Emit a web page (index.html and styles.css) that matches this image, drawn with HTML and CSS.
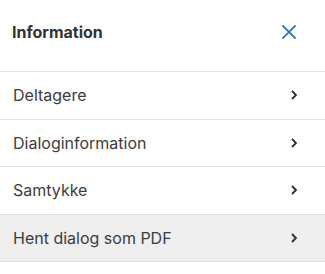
FILE: index.html
```html
<!DOCTYPE html>
<html lang="da">
<head>
    <meta charset="UTF-8">
    <meta name="viewport" content="width=device-width, initial-scale=1.0">
    <title>Information</title>
    <link rel="stylesheet" href="styles.css">
</head>
<body>
    <div class="panel">
        <div class="header">
            <h1>Information</h1>
            <button class="close" type="button" aria-label="Luk">
                <svg width="14" height="14" viewBox="0 0 14 14">
                    <path d="M1 1 L13 13 M13 1 L1 13" stroke="#2c79d1" stroke-width="1.8" stroke-linecap="square" fill="none"/>
                </svg>
            </button>
        </div>

        <ul class="menu">
            <li class="item">
                <span>Deltagere</span>
                <svg class="chevron" width="8" height="12" viewBox="0 0 8 12"><path d="M2 2 L6 6 L2 10" stroke="#2e2e2e" stroke-width="1.8" fill="none"/></svg>
            </li>
            <li class="item">
                <span>Dialoginformation</span>
                <svg class="chevron" width="8" height="12" viewBox="0 0 8 12"><path d="M2 2 L6 6 L2 10" stroke="#2e2e2e" stroke-width="1.8" fill="none"/></svg>
            </li>
            <li class="item">
                <span>Samtykke</span>
                <svg class="chevron" width="8" height="12" viewBox="0 0 8 12"><path d="M2 2 L6 6 L2 10" stroke="#2e2e2e" stroke-width="1.8" fill="none"/></svg>
            </li>
            <li class="item active">
                <span>Hent dialog som PDF</span>
                <svg class="chevron" width="8" height="12" viewBox="0 0 8 12"><path d="M2 2 L6 6 L2 10" stroke="#2e2e2e" stroke-width="1.8" fill="none"/></svg>
            </li>
        </ul>
    </div>
</body>
</html>
```

FILE: styles.css
```css
body {
    margin: 0;
    background-color: #fff;
    font-family: Inter, "Noto Sans", sans-serif;
    color: #3c3c3c;
}

.panel {
    width: 325px;
}

.header {
    height: 72px;
    display: flex;
    align-items: center;
    justify-content: space-between;
    padding: 0 29px 8px 12px;
    box-sizing: border-box;
    border-bottom: 1px solid #e2e2e2;
}

h1 {
    margin: 0;
    font-size: 16px;
    font-weight: 700;
    color: #333;
}

.close {
    background: none;
    border: none;
    padding: 0;
    width: 14px;
    height: 14px;
    cursor: pointer;
}

.close svg {
    display: block;
}

.menu {
    list-style: none;
    margin: 0;
    padding: 0;
}

.item {
    height: 46.5px;
    display: flex;
    align-items: center;
    justify-content: space-between;
    padding: 0 27px 0 13px;
    border-bottom: 1px solid #e2e2e2;
    font-size: 16px;
    cursor: pointer;
}

.item.active {
    background-color: #efefef;
}

.chevron {
    display: block;
}
```
